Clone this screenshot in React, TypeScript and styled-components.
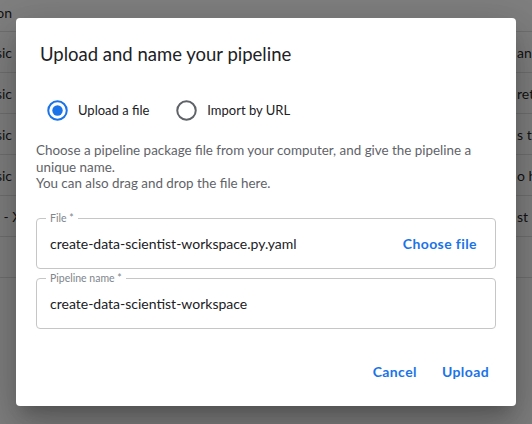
import React from "react";
import styled, { createGlobalStyle } from "styled-components";

const GlobalStyle = createGlobalStyle`
  html, body { margin: 0; padding: 0; }
  body {
    font-family: Lato, Roboto, "Noto Sans", "Liberation Sans", sans-serif;
    background: #ffffff;
    -webkit-font-smoothing: antialiased;
  }
`;

const Page = styled.div`
  position: relative;
  width: 532px;
  height: 424px;
  overflow: hidden;
  background: #ffffff;
`;

const Table = styled.div`
  display: flex;
  flex-direction: column;
`;

const Row = styled.div<{ $header?: boolean }>`
  display: grid;
  grid-template-columns: 12px 505px 200px;
  align-items: ${(p) => (p.$header ? "end" : "center")};
  height: ${(p) => (p.$header ? "21px" : "40px")};
  padding-bottom: ${(p) => (p.$header ? "10px" : "0")};
  border-bottom: 1px solid #e0e0e0;
  font-size: 14px;
  color: rgba(0, 0, 0, 0.87);
  white-space: nowrap;
`;

const LeftCell = styled.div`
  display: flex;
  justify-content: flex-end;
  overflow: visible;
`;

const Cell = styled.div``;

const Overlay = styled.div`
  position: absolute;
  inset: 0;
  background: rgba(0, 0, 0, 0.5);
`;

const Dialog = styled.div`
  position: absolute;
  left: 16px;
  top: 18px;
  width: 500px;
  height: 388px;
  box-sizing: border-box;
  background: #ffffff;
  border-radius: 4px;
  box-shadow: 0px 11px 15px -7px rgba(0, 0, 0, 0.2),
    0px 24px 38px 3px rgba(0, 0, 0, 0.14),
    0px 9px 46px 8px rgba(0, 0, 0, 0.12);
  display: flex;
  flex-direction: column;
`;

const Title = styled.h2`
  margin: 0;
  padding: 20px 24px 0 24px;
  font-size: 18.5px;
  line-height: 32px;
  font-weight: 400;
  color: #202124;
`;

const Content = styled.div`
  padding: 19px 20px 0 20px;
  display: flex;
  flex-direction: column;
`;

const RadioGroup = styled.div`
  display: flex;
  align-items: center;
`;

const RadioLabel = styled.label`
  display: flex;
  align-items: center;
  margin-right: 16px;
  font-size: 13px;
  color: #202124;
  cursor: pointer;
`;

const RadioBox = styled.span`
  width: 42px;
  height: 42px;
  display: flex;
  align-items: center;
  justify-content: center;
`;

const Description = styled.p`
  margin: 11px 0 0 0;
  font-size: 13.4px;
  line-height: 16.7px;
  color: #5f6368;
  white-space: nowrap;
`;

const Fields = styled.div`
  margin-top: 26px;
  display: flex;
  flex-direction: column;
  gap: 9px;
`;

const Field = styled.div`
  position: relative;
  height: 51px;
  box-sizing: border-box;
  border: 1px solid #c6c6c6;
  border-radius: 4px;
  padding: 0 18px 0 13px;
  display: flex;
  align-items: center;
  justify-content: space-between;
`;

const FieldLabel = styled.span`
  position: absolute;
  top: -6px;
  left: 9px;
  padding: 0 4px;
  background: #ffffff;
  font-size: 10.5px;
  line-height: 10px;
  color: #80868b;
`;

const Value = styled.span`
  font-size: 14px;
  color: #202124;
`;

const TextButton = styled.button`
  border: none;
  background: none;
  padding: 0;
  font-family: inherit;
  font-size: 14px;
  font-weight: 700;
  color: #1a73e8;
  cursor: pointer;
  letter-spacing: 0.4px;
`;

const Actions = styled.div`
  margin-top: auto;
  padding: 0 27px 26px 0;
  display: flex;
  justify-content: flex-end;
  align-items: center;
  gap: 25px;
`;

const Radio: React.FC<{ checked?: boolean }> = ({ checked }) => (
  <RadioBox>
    <svg width="21" height="21" viewBox="0 0 21 21">
      <circle
        cx="10.5"
        cy="10.5"
        r="9.25"
        fill="none"
        stroke={checked ? "#1a73e8" : "#5f6368"}
        strokeWidth="2"
      />
      {checked && <circle cx="10.5" cy="10.5" r="5.2" fill="#1a73e8" />}
    </svg>
  </RadioBox>
);

const rows: [string, string][] = [
  ["Basic", "and"],
  ["Basic", "retr"],
  ["Basic", "s the"],
  ["Basic", "o h"],
  ["- XGBoost", "st r"],
  ["", ""],
];

export default function App() {
  return (
    <Page>
      <GlobalStyle />
      <Table>
        <Row $header>
          <LeftCell>Description</LeftCell>
          <Cell />
          <Cell />
        </Row>
        {rows.map(([l, r], i) => (
          <Row key={i}>
            <LeftCell>
              <span style={{ marginRight: l.startsWith("-") ? "-55px" : "0" }}>{l}</span>
            </LeftCell>
            <Cell />
            <Cell>{r}</Cell>
          </Row>
        ))}
      </Table>
      <Overlay />
      <Dialog>
        <Title>Upload and name your pipeline</Title>
        <Content>
          <RadioGroup>
            <RadioLabel>
              <Radio checked />
              Upload a file
            </RadioLabel>
            <RadioLabel>
              <Radio />
              Import by URL
            </RadioLabel>
          </RadioGroup>
          <Description>
            Choose a pipeline package file from your computer, and give the pipeline a
            <br />
            unique name.
            <br />
            You can also drag and drop the file here.
          </Description>
          <Fields>
            <Field>
              <FieldLabel>File *</FieldLabel>
              <Value>create-data-scientist-workspace.py.yaml</Value>
              <TextButton>Choose file</TextButton>
            </Field>
            <Field>
              <FieldLabel>Pipeline name *</FieldLabel>
              <Value>create-data-scientist-workspace</Value>
            </Field>
          </Fields>
        </Content>
        <Actions>
          <TextButton>Cancel</TextButton>
          <TextButton>Upload</TextButton>
        </Actions>
      </Dialog>
    </Page>
  );
}
